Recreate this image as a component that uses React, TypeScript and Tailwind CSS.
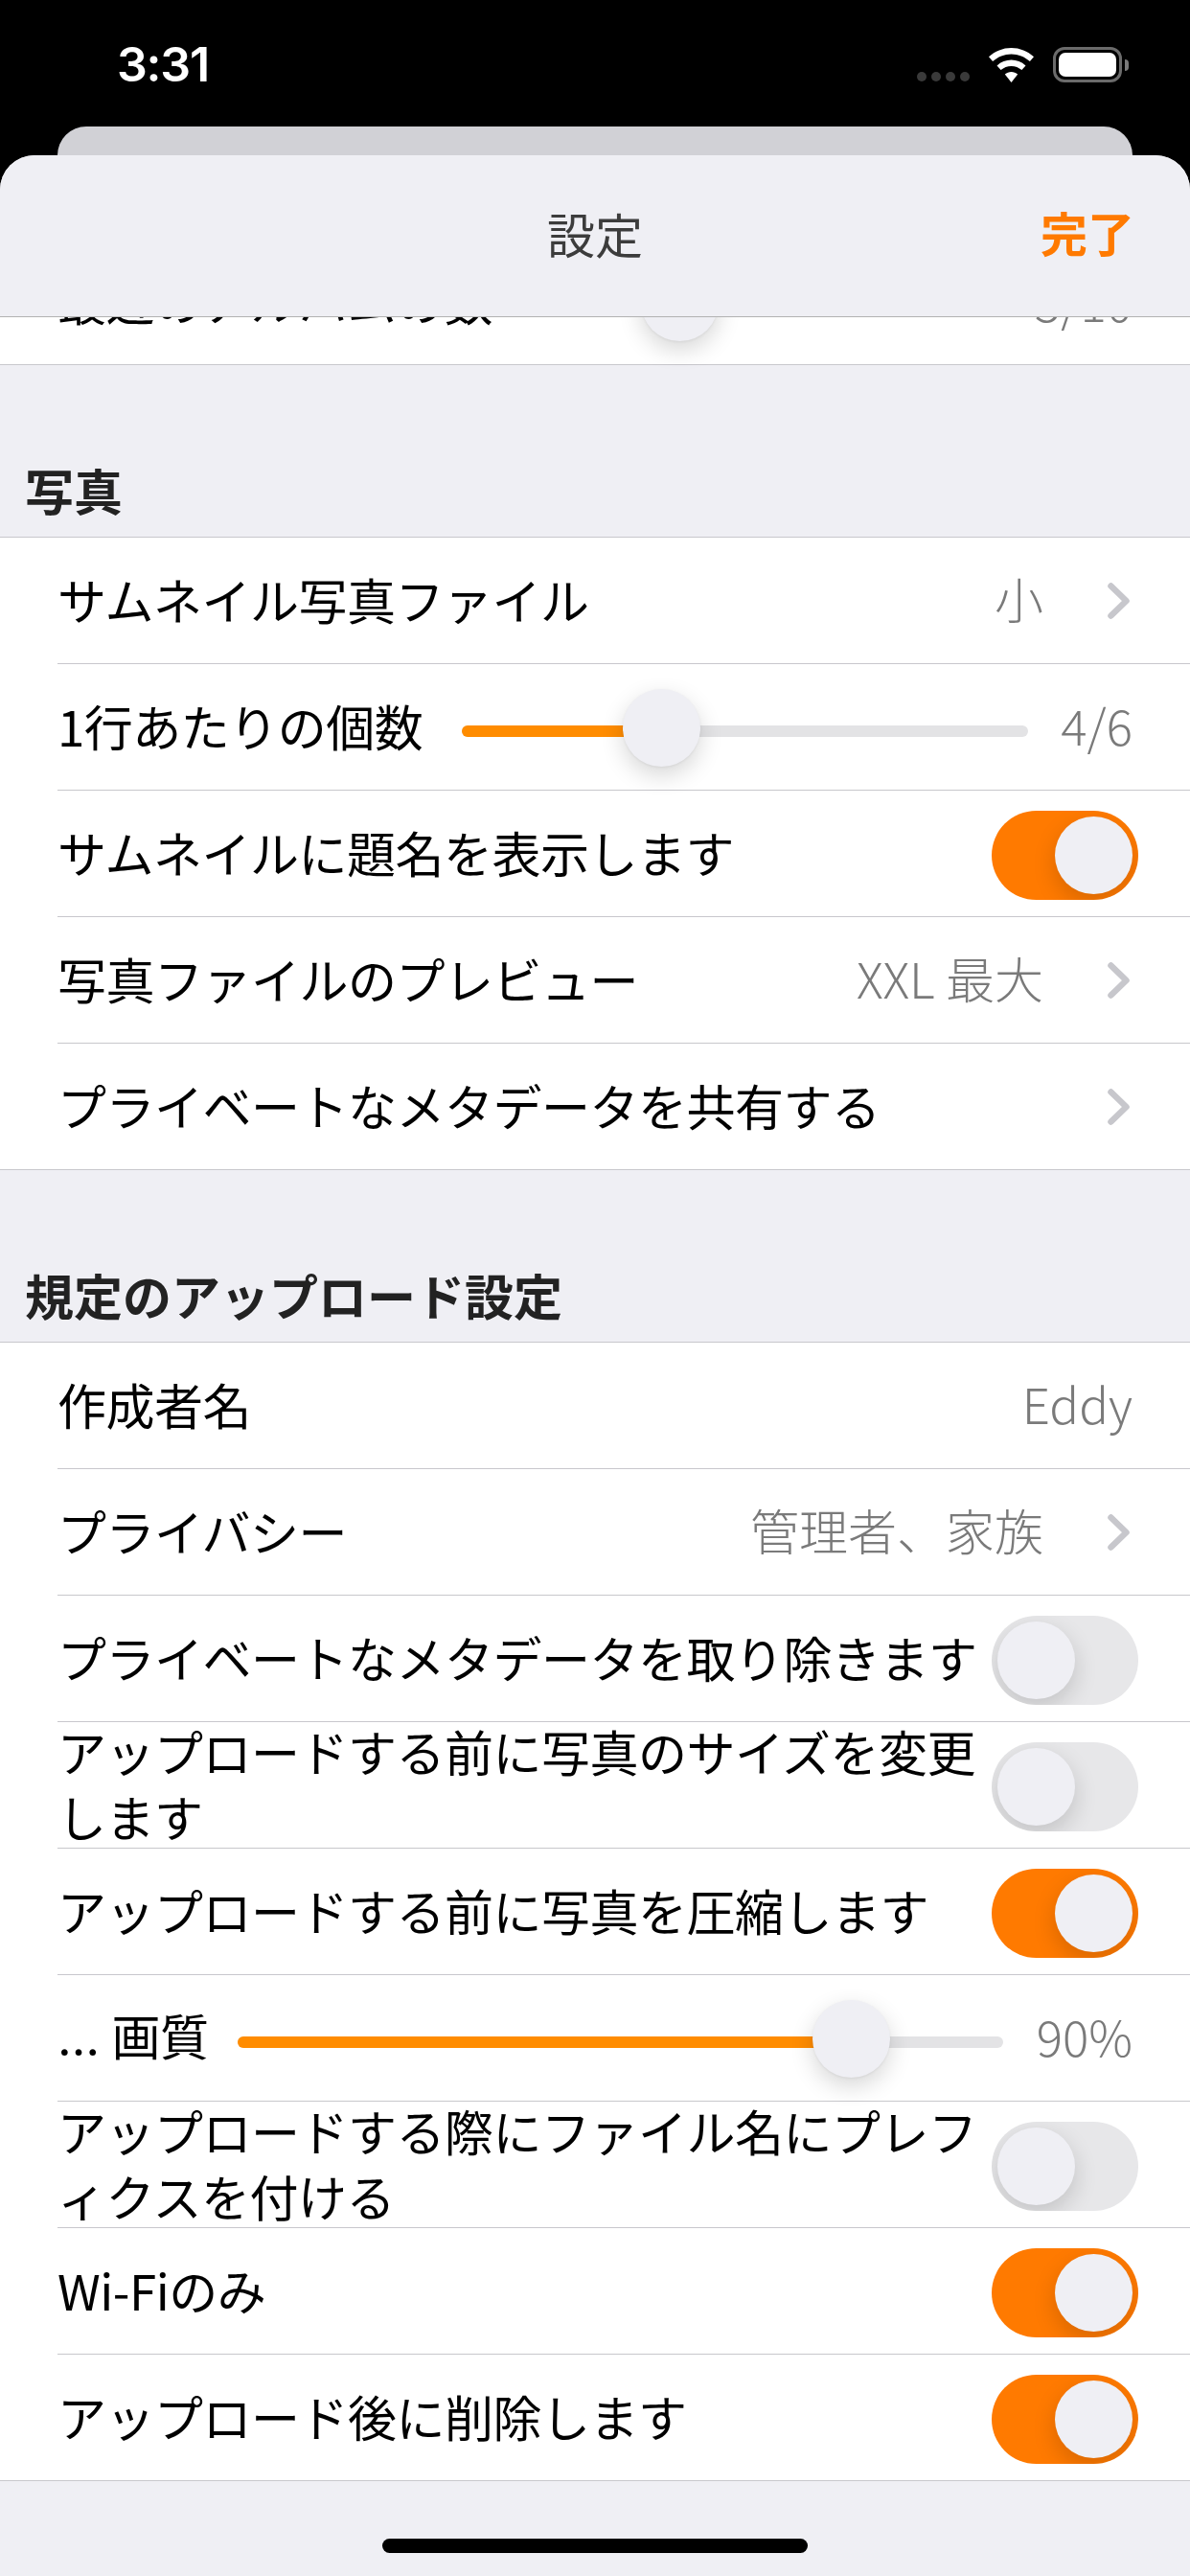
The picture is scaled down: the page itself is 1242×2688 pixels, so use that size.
import React from "react";

const TRACK_ON = "bg-[#ff8c00]";

function Thumb({ left }: { left: number }) {
  return (
    <div
      className="absolute top-1/2 -mt-[44px] w-[81px] h-[81px] rounded-full bg-[#efeff4] shadow-[0_9px_24px_rgba(0,0,0,0.16),0_1px_3px_rgba(0,0,0,0.06)]"
      style={{ left }}
    />
  );
}

function Slider({ width, thumbLeft, className }: { width: number; thumbLeft: number; className: string }) {
  return (
    <div className={`relative h-[12px] mt-[8px] rounded-full bg-[#e3e3e5] shrink-0 ${className}`} style={{ width }}>
      <div className={`h-full rounded-l-full ${TRACK_ON}`} style={{ width: thumbLeft + 10 }} />
      <Thumb left={thumbLeft} />
    </div>
  );
}

function Switch({ on }: { on: boolean }) {
  return (
    <div
      className={`relative mt-[3px] -mr-[6px] flex w-[153px] h-[93px] shrink-0 items-center rounded-full overflow-hidden px-[6px] ${
        on ? "justify-end bg-[#ff7a00]" : "justify-start bg-[#e7e7e9]"
      }`}
    >
      <div className="w-[81px] h-[81px] rounded-full bg-[#efeff4] shadow-[0_9px_24px_rgba(0,0,0,0.16)]" />
    </div>
  );
}

function Chevron() {
  return (
    <svg width="23" height="38" viewBox="0 0 23 38" className="ml-[67px] mr-[3px] shrink-0">
      <path d="M3.5 3.5 L19.5 19 L3.5 34.5" fill="none" stroke="#c7c7cc" strokeWidth="6.5" strokeLinecap="round" strokeLinejoin="round" />
    </svg>
  );
}

function Value({ children }: { children: React.ReactNode }) {
  return <span className="mb-[4px] text-[#7a7a7a] font-light whitespace-nowrap">{children}</span>;
}

function Row({ children, last }: { children: React.ReactNode; last?: boolean }) {
  return (
    <div className={`bg-white ${last ? "border-b border-[#c8c7cc]" : "pl-[60px]"}`}>
      <div
        className={`flex items-center justify-between pr-[60px] ${
          last ? "pl-[60px] h-[131px]" : "h-[132px] border-b border-[#c8c7cc]"
        }`}
      >
        {children}
      </div>
    </div>
  );
}

function Label({ children }: { children: React.ReactNode }) {
  return <span className="mb-[4px] whitespace-nowrap leading-[68px] tracking-[-0.5px]">{children}</span>;
}

function Header({ children }: { children: React.ReactNode }) {
  return (
    <div className="h-[179px] flex items-end pl-[26px] pb-[13px] text-[#222222] font-bold leading-[72px]">{children}</div>
  );
}

export default function App() {
  return (
    <div className="w-[1242px] h-[2688px] bg-black overflow-hidden flex flex-col text-[51px] text-black [font-family:'Noto_Sans_CJK_JP',sans-serif]">
      {/* status bar */}
      <div className="h-[132px] shrink-0 flex justify-between items-start pt-[37px] pl-[122px] pr-[64px] text-white">
        <span className="text-[50px] font-semibold leading-[60px] tracking-[-1.2px] [font-family:Inter,sans-serif]">3:31</span>
        <div className="flex items-end mt-[12px]">
          <div className="flex gap-[5px] mb-[1px]">
            {[0, 1, 2, 3].map((i) => (
              <div key={i} className="w-[10px] h-[10px] rounded-full bg-[#3a3a3a]" />
            ))}
          </div>
          <svg width="47" height="36" viewBox="0 0 47 36" className="ml-[20px]">
            <path fill="#fff" d="M23.5 0C14.6 0 6.6 3.4 0 9.3L4.1 14C9.5 9.200 16.200 6.400 23.500 6.400C30.800 6.400 37.500 9.200 42.900 14L47 9.300C40.400 3.400 32.400 0 23.500 0Z" />
            <path fill="#fff" d="M23.5 12.500C17.900 12.500 12.800 14.600 8.500 18.400L12.600 23.100C15.600 20.400 19.400 18.900 23.500 18.900C27.600 18.900 31.400 20.400 34.400 23.100L38.500 18.400C34.200 14.600 29.100 12.500 23.500 12.500Z" />
            <path fill="#fff" d="M23.500 25C21 25 18.700 25.900 16.800 27.600L23.500 36L30.200 27.600C28.300 25.900 26 25 23.500 25Z" />
          </svg>
          <div className="flex items-center ml-[20px]">
            <div className="w-[72px] h-[37px] rounded-[12px] border-[3px] border-[#6b6b6b] p-[3px]">
              <div className="w-full h-full rounded-[7px] bg-white" />
            </div>
            <div className="ml-[3px] w-[4px] h-[12px] rounded-r-full bg-[#7a7a7a]" />
          </div>
        </div>
      </div>

      {/* card behind */}
      <div className="h-[60px] shrink-0 mx-[60px] rounded-t-[30px] bg-[#d1d1d6]" />

      {/* sheet */}
      <div className="-mt-[30px] flex-1 min-h-0 flex flex-col rounded-t-[36px] overflow-hidden bg-[#efeff4] relative">
        <div className="relative z-10 h-[169px] shrink-0 flex items-center justify-center bg-[#efeff4] border-b border-[#b2b2b2] pb-[6px]">
          <span className="text-[#3c3c3c] text-[50px]">設定</span>
          <span className="absolute right-[58px] top-[50px] leading-[60px] text-[#ff7a00] font-bold text-[49px]">完了</span>
        </div>

        <div className="flex-1 min-h-0 overflow-hidden relative">
          <div className="-mt-[82px]">
            <Row last>
              <Label>最近のアルバムの数</Label>
              <Slider width={490} thumbLeft={117} className="ml-[33px]" />
              <span className="ml-[34px]"><Value>5/10</Value></span>
            </Row>

            <Header>写真</Header>
            <div className="border-t border-[#c8c7cc]">
              <Row>
                <Label>サムネイル写真ファイル</Label>
                <div className="flex items-center"><Value>小</Value><Chevron /></div>
              </Row>
              <Row>
                <Label>1行あたりの個数</Label>
                <Slider width={591} thumbLeft={168} className="ml-auto mr-[34px]" />
                <Value>4/6</Value>
              </Row>
              <Row>
                <Label>サムネイルに題名を表示します</Label>
                <Switch on />
              </Row>
              <Row>
                <Label>写真ファイルのプレビュー</Label>
                <div className="flex items-center"><Value>XXL 最大</Value><Chevron /></div>
              </Row>
              <Row last>
                <Label>プライベートなメタデータを共有する</Label>
                <Chevron />
              </Row>
            </div>

            <Header>規定のアップロード設定</Header>
            <div className="border-t border-[#c8c7cc]">
              <Row>
                <Label>作成者名</Label>
                <Value>Eddy</Value>
              </Row>
              <Row>
                <Label>プライバシー</Label>
                <div className="flex items-center"><Value>管理者、家族</Value><Chevron /></div>
              </Row>
              <Row>
                <Label>プライベートなメタデータを取り除きます</Label>
                <Switch on={false} />
              </Row>
              <Row>
                <Label>アップロードする前に写真のサイズを変更<br />します</Label>
                <Switch on={false} />
              </Row>
              <Row>
                <Label>アップロードする前に写真を圧縮します</Label>
                <Switch on />
              </Row>
              <Row>
                <Label><span className="[font-family:Inter,sans-serif] tracking-[-1px]">… </span>画質</Label>
                <Slider width={799} thumbLeft={600} className="ml-auto mr-[35px]" />
                <Value>90%</Value>
              </Row>
              <Row>
                <Label>アップロードする際にファイル名にプレフ<br />ィクスを付ける</Label>
                <Switch on={false} />
              </Row>
              <Row>
                <Label>Wi-Fiのみ</Label>
                <Switch on />
              </Row>
              <Row last>
                <Label>アップロード後に削除します</Label>
                <Switch on />
              </Row>
            </div>

            <div className="flex justify-center pt-[60px]">
              <div className="w-[444px] h-[15px] rounded-[8px] bg-black" />
            </div>
          </div>
        </div>
      </div>
    </div>
  );
}
